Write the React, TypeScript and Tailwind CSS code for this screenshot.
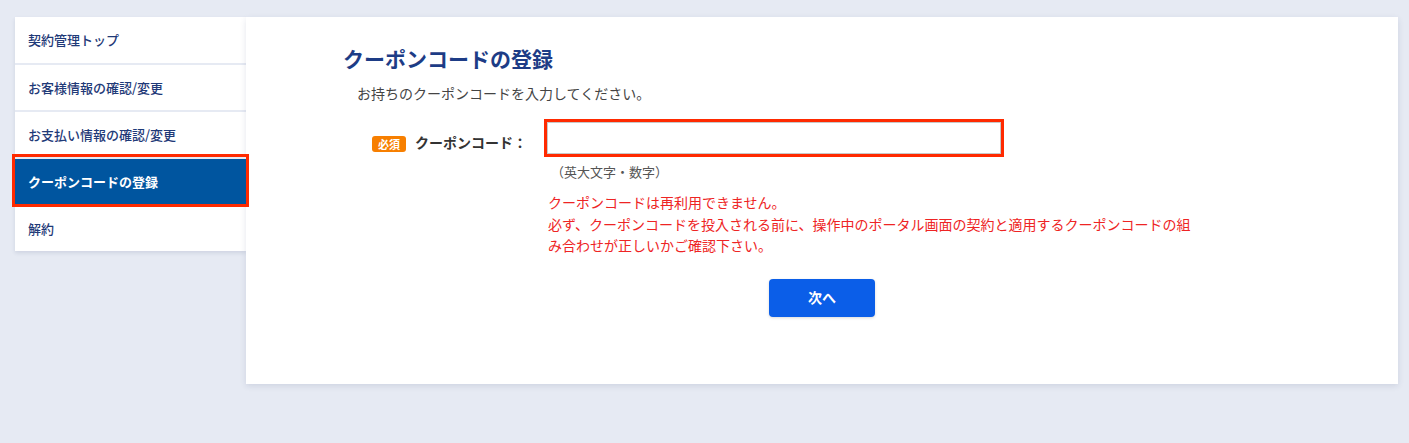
const menu = [
  { label: '契約管理トップ', active: false },
  { label: 'お客様情報の確認/変更', active: false },
  { label: 'お支払い情報の確認/変更', active: false },
  { label: 'クーポンコードの登録', active: true },
  { label: '解約', active: false },
]

const App: React.FC = () => {
  return (
    <div
      className="min-h-[443px] w-full bg-[#e6eaf3] pt-[17px] pl-[15px] pr-[11px]"
      style={{ fontFamily: '"Noto Sans CJK JP", "Noto Sans", sans-serif' }}
    >
      <div className="flex items-start">
        <nav className="w-[231px] shrink-0 bg-white shadow-[0_2px_4px_rgba(30,50,100,0.12)]">
          {menu.map((item, i) => (
            <div
              key={item.label}
              className={
                (i > 0 ? 'h-[47px] border-t-2 border-[#e6eaf3] ' : 'h-[46px] ') +
                (item.active
                  ? 'relative z-10 bg-[#00559f] text-white font-bold outline-3 outline-[#ff2a00] '
                  : 'text-[#1f3a78] font-medium ') +
                'flex items-center pl-[13px] text-[13px]'
              }
            >
              {item.label}
            </div>
          ))}
        </nav>

        <main className="flex-1 h-[367px] bg-white shadow-[0_2px_6px_rgba(30,50,100,0.12)] pt-[27px] pl-[97px]">
          <h1 className="text-[21px] leading-[28px] font-bold text-[#1d3c86]">クーポンコードの登録</h1>
          <p className="mt-[11px] pl-[14px] text-[14px] leading-[20px] text-[#444]">
            お持ちのクーポンコードを入力してください。
          </p>

          <div className="mt-[19px] flex items-start">
            <div className="w-[204px] shrink-0 pr-[20px] mt-[10px] flex items-center justify-end">
              <span className="mt-[3px] mr-[9px] rounded-[3px] bg-[#f77f00] px-[6px] text-[11px] leading-[16px] font-bold text-white">
                必須
              </span>
              <span className="text-[14px] leading-[20px] font-bold text-[#333]">クーポンコード：</span>
            </div>
            <div className="flex flex-col">
              <input
                type="text"
                className="h-[32px] w-[454px] rounded-none border border-[#c8c8c8] bg-white outline-3 outline-[#ff2a00]"
              />
              <div className="mt-[8px] pl-[4px] text-[13px] leading-[20px] text-[#555]">（英大文字・数字）</div>
              <div className="mt-[10px] w-[650px] pl-[1px] text-[14px] leading-[21.5px] text-[#ee2424]">
                クーポンコードは再利用できません。
                <br />
                必ず、クーポンコードを投入される前に、操作中のポータル画面の契約と適用するクーポンコードの組み合わせが正しいかご確認下さい。
              </div>
            </div>
          </div>

          <div className="mt-[22px] -ml-[97px] flex justify-center">
            <button className="h-[38px] w-[106px] rounded-[4px] bg-[#0b5ee8] text-[14px] font-bold text-white shadow-[0_1px_3px_rgba(0,0,0,0.15)]">
              次へ
            </button>
          </div>
        </main>
      </div>
    </div>
  )
}

export default App
